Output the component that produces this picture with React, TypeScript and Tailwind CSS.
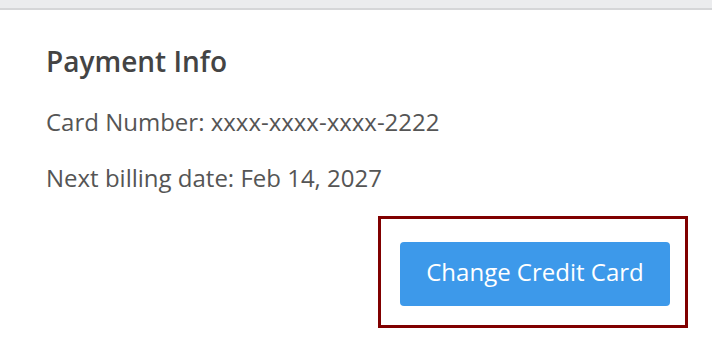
export default function App() {
  return (
    <div className="h-[342px] w-[712px] overflow-hidden bg-white font-['Open_Sans',sans-serif]">
      <div className="h-[8px] bg-[#ebecee]" />
      <div className="h-[2px] bg-[#d5d6d8]" />
      <div className="px-[46px] pt-[37px]">
        <h2 className="text-[28px] font-semibold leading-[28px] text-[#444]">Payment Info</h2>
        <p className="mt-[35px] text-[24px] leading-[24px] text-[#555]">
          Card Number: xxxx-xxxx-xxxx-2222
        </p>
        <p className="mt-[32px] text-[24px] leading-[24px] text-[#555]">
          Next billing date: Feb 14, 2027
        </p>
      </div>
      <div className="mr-[24px] mt-[26px] flex justify-end">
        <div className="border-[3px] border-[#800000] pb-[19px] pl-[19px] pr-[15px] pt-[23px]">
          <button className="h-[64px] w-[270px] rounded-[4px] bg-[#3d99ea] pb-[5px] text-[24px] leading-[24px] text-white">
            Change Credit Card
          </button>
        </div>
      </div>
    </div>
  );
}
